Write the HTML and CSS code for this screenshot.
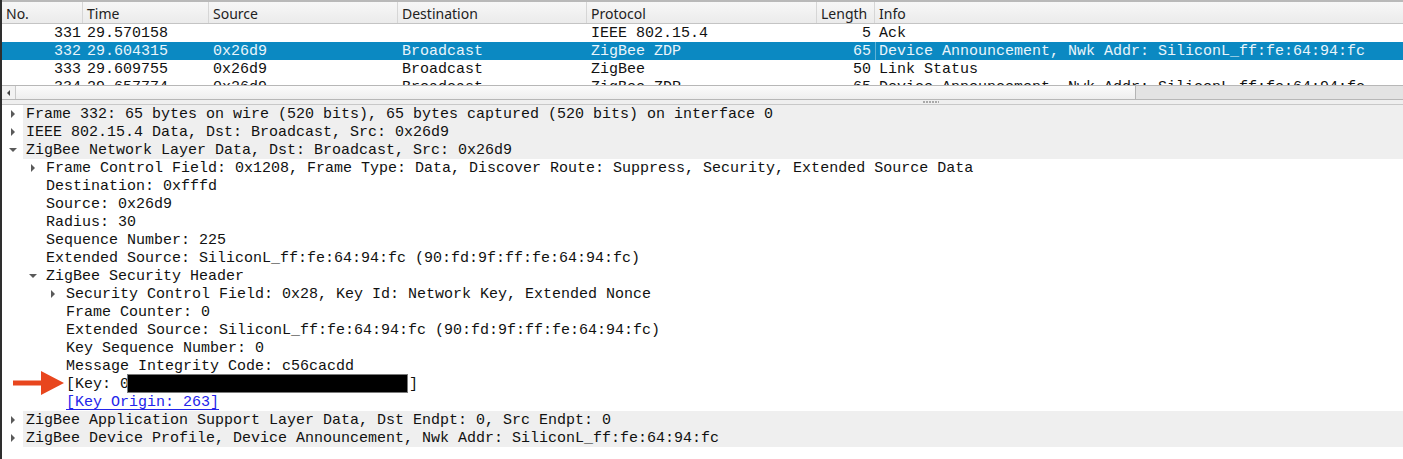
FILE: index.html
```html
<!DOCTYPE html>
<html>
<head>
<meta charset="utf-8">
<link rel="stylesheet" href="styles.css">
</head>
<body>
<div class="app">
  <section class="plist">
    <div class="cols head">
      <div class="hc">No.</div>
      <div class="hc">Time</div>
      <div class="hc">Source</div>
      <div class="hc">Destination</div>
      <div class="hc">Protocol</div>
      <div class="hc">Length</div>
      <div class="hc last">Info</div>
    </div>
    <div class="rows">
      <div class="cols row">
        <div class="c num">331</div><div class="c">29.570158</div><div class="c"></div><div class="c"></div><div class="c">IEEE 802.15.4</div><div class="c num">5</div><div class="c">Ack</div>
      </div>
      <div class="cols row sel">
        <div class="c num">332</div><div class="c">29.604315</div><div class="c">0x26d9</div><div class="c">Broadcast</div><div class="c">ZigBee ZDP</div><div class="c num">65</div><div class="c focus">Device Announcement, Nwk Addr: SiliconL_ff:fe:64:94:fc</div>
      </div>
      <div class="cols row">
        <div class="c num">333</div><div class="c">29.609755</div><div class="c">0x26d9</div><div class="c">Broadcast</div><div class="c">ZigBee</div><div class="c num">50</div><div class="c">Link Status</div>
      </div>
      <div class="cols row">
        <div class="c num">334</div><div class="c">29.657774</div><div class="c">0x26d9</div><div class="c">Broadcast</div><div class="c">ZigBee ZDP</div><div class="c num">65</div><div class="c">Device Announcement, Nwk Addr: SiliconL_ff:fe:64:94:fc</div>
      </div>
    </div>
    <div class="hscroll">
      <div class="sb-arrow"><span class="tri-left"></span></div>
      <div class="sb-handle"></div>
      <div class="sb-trough"></div>
    </div>
  </section>
  <div class="splitter"><span class="dots"></span></div>
  <section class="tree">
    <div class="node top"><span class="exp closed"></span><span class="txt">Frame 332: 65 bytes on wire (520 bits), 65 bytes captured (520 bits) on interface 0</span></div>
    <div class="node top"><span class="exp closed"></span><span class="txt">IEEE 802.15.4 Data, Dst: Broadcast, Src: 0x26d9</span></div>
    <div class="node top"><span class="exp open"></span><span class="txt">ZigBee Network Layer Data, Dst: Broadcast, Src: 0x26d9</span></div>
    <div class="node l1"><span class="exp closed"></span><span class="txt">Frame Control Field: 0x1208, Frame Type: Data, Discover Route: Suppress, Security, Extended Source Data</span></div>
    <div class="node l1"><span class="exp"></span><span class="txt">Destination: 0xfffd</span></div>
    <div class="node l1"><span class="exp"></span><span class="txt">Source: 0x26d9</span></div>
    <div class="node l1"><span class="exp"></span><span class="txt">Radius: 30</span></div>
    <div class="node l1"><span class="exp"></span><span class="txt">Sequence Number: 225</span></div>
    <div class="node l1"><span class="exp"></span><span class="txt">Extended Source: SiliconL_ff:fe:64:94:fc (90:fd:9f:ff:fe:64:94:fc)</span></div>
    <div class="node l1"><span class="exp open"></span><span class="txt">ZigBee Security Header</span></div>
    <div class="node l2"><span class="exp closed"></span><span class="txt">Security Control Field: 0x28, Key Id: Network Key, Extended Nonce</span></div>
    <div class="node l2"><span class="exp"></span><span class="txt">Frame Counter: 0</span></div>
    <div class="node l2"><span class="exp"></span><span class="txt">Extended Source: SiliconL_ff:fe:64:94:fc (90:fd:9f:ff:fe:64:94:fc)</span></div>
    <div class="node l2"><span class="exp"></span><span class="txt">Key Sequence Number: 0</span></div>
    <div class="node l2"><span class="exp"></span><span class="txt">Message Integrity Code: c56cacdd</span></div>
    <div class="node l2"><span class="exp"></span><span class="txt">[Key: 0<span class="redact"></span>]</span></div>
    <div class="node l2"><span class="exp"></span><span class="txt link">[Key Origin: 263]</span></div>
    <div class="node top"><span class="exp closed"></span><span class="txt">ZigBee Application Support Layer Data, Dst Endpt: 0, Src Endpt: 0</span></div>
    <div class="node top"><span class="exp closed"></span><span class="txt">ZigBee Device Profile, Device Announcement, Nwk Addr: SiliconL_ff:fe:64:94:fc</span></div>
    <svg class="red-arrow" width="52" height="24" viewBox="0 0 52 24">
      <polygon points="0,9.5 28,9.5 28,0 51,12 28,24 28,14.5 0,14.5" fill="#e8461e"/>
    </svg>
  </section>
</div>
</body>
</html>
```

FILE: styles.css
```css
html, body {
  margin: 0;
  padding: 0;
  background: #ffffff;
}
.app {
  width: 1403px;
  height: 459px;
  box-sizing: border-box;
  border-left: 2px solid #2e2e2e;
  overflow: hidden;
  font-family: "Liberation Mono", monospace;
  font-size: 15px;
  color: #111;
}
.plist {
  display: flex;
  flex-direction: column;
}
.cols {
  display: grid;
  grid-template-columns: 81px 126px 189px 189px 230px 58px 1fr;
}
.head {
  height: 21px;
  border-top: 2px solid #b9b9b9;
  border-bottom: 1px solid #c4c4c4;
  background: linear-gradient(#f7f7f7, #ebebeb);
  font-family: "Noto Sans", "DejaVu Sans", sans-serif;
  font-size: 14px;
  color: #222;
}
.hc {
  padding-left: 4px;
  line-height: 23px;
  border-right: 1px solid #d6d6d6;
  white-space: nowrap;
  overflow: hidden;
}
.hc.last {
  border-right: 0;
}
.rows {
  height: 61px;
  overflow: hidden;
}
.row {
  height: 18px;
  line-height: 19px;
  white-space: pre;
}
.c {
  padding: 0 4px;
  overflow: hidden;
  white-space: pre;
}
.c.num {
  text-align: right;
  padding-right: 2px;
}
.row .c.num:nth-child(6) {
  padding-right: 4px;
}
.row.sel {
  background: #0b89c2;
  color: #eaf5fb;
}
.c.focus {
  box-shadow: inset 1px 0 0 rgba(255, 255, 255, 0.35);
}
.hscroll {
  height: 13px;
  display: flex;
  border-top: 1px solid #b7b7b7;
  border-bottom: 1px solid #b7b7b7;
  background: #e4e4e4;
}
.sb-arrow {
  width: 13px;
  display: flex;
  align-items: center;
  justify-content: center;
  background: #f2f2f2;
}
.tri-left {
  width: 0;
  height: 0;
  border-top: 3px solid transparent;
  border-bottom: 3px solid transparent;
  border-right: 3px solid #444;
}
.sb-handle {
  width: 1121px;
  box-sizing: border-box;
  border-left: 1px solid #c9c9c9;
  border-right: 1px solid #b4b4b4;
  background: linear-gradient(#fbfbfb, #eeeeee);
}
.sb-trough {
  flex: 1;
  background: #e3e3e3;
}
.splitter {
  height: 5px;
  background: #efefef;
  border-bottom: 1px solid #c8c8c8;
  box-sizing: border-box;
  display: flex;
  justify-content: center;
  padding-left: 456px;
}
.dots {
  width: 16px;
  height: 2px;
  margin-top: 1px;
  background: repeating-linear-gradient(90deg, #a9a9a9 0 2px, transparent 2px 3px);
}
.tree {
  position: relative;
}
.node {
  display: flex;
  height: 18px;
  line-height: 19px;
  white-space: pre;
}
.node.l1 {
  padding-left: 20px;
}
.node.l2 {
  padding-left: 40px;
}
.exp {
  width: 21px;
  flex: none;
  display: flex;
  align-items: center;
  justify-content: center;
}
.exp.closed::before {
  content: "";
  width: 0;
  height: 0;
  border-top: 4px solid transparent;
  border-bottom: 4px solid transparent;
  border-left: 4px solid #5a5a5a;
  margin-left: 1px;
}
.exp.open::before {
  content: "";
  width: 0;
  height: 0;
  border-left: 4px solid transparent;
  border-right: 4px solid transparent;
  border-top: 4px solid #5a5a5a;
  margin-left: 1px;
}
.txt {
  padding-left: 3px;
}
.node.top .txt {
  flex: 1;
  background: #efefef;
}
.link {
  color: #2424ea;
  text-decoration: underline;
  text-underline-offset: 3px;
}
.redact {
  display: inline-block;
  width: 281px;
  height: 19px;
  vertical-align: top;
  box-sizing: border-box;
  background: #000;
  border: 1px solid #7a7a7a;
  margin-left: -2px;
  margin-right: 1px;
  margin-top: -1px;
}
.red-arrow {
  position: absolute;
  left: 11px;
  top: 266px;
}
```
